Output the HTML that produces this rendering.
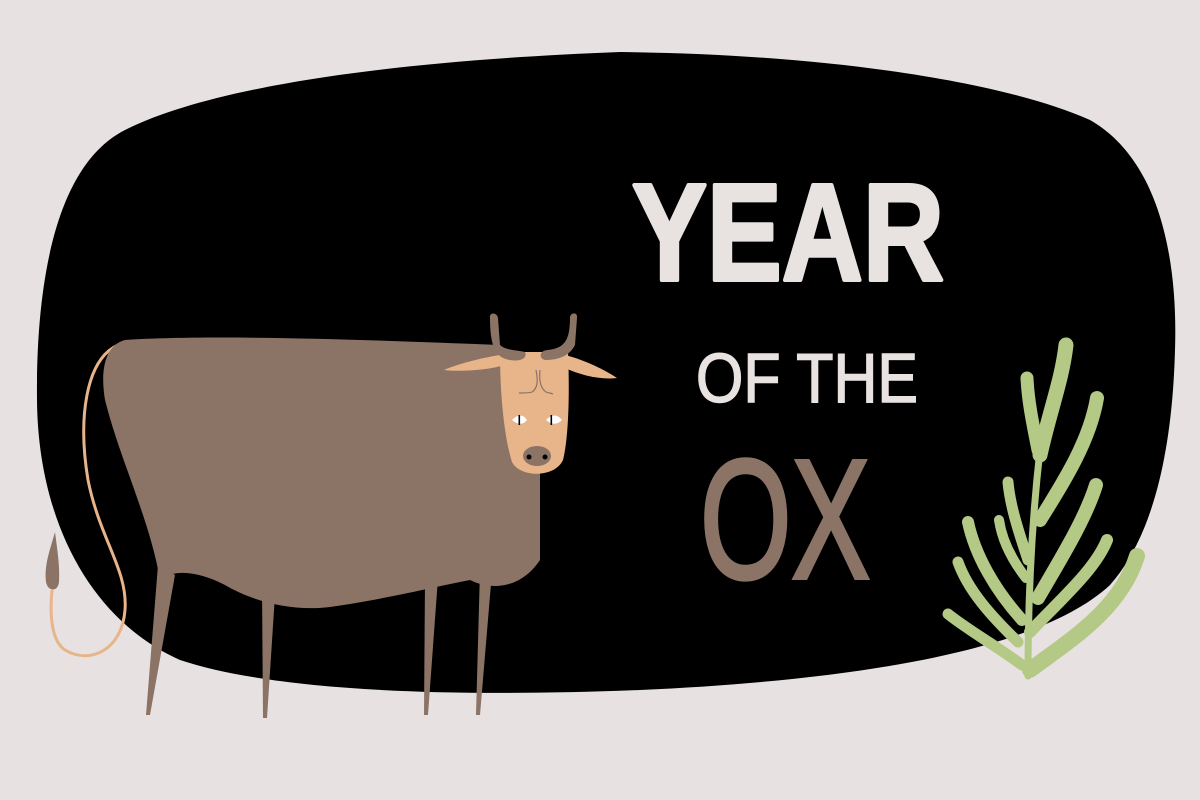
<!DOCTYPE html>
<html><head><meta charset="utf-8"><style>
html,body{margin:0;padding:0;background:#e7e2e1;}
svg{display:block}
</style></head><body>
<svg width="1200" height="800" viewBox="0 0 1200 800" xmlns="http://www.w3.org/2000/svg">
<rect width="1200" height="800" fill="#e7e2e1"/>
<!-- blob -->
<path d="M125,130 C200,92 360,62 620,52 C820,54 1000,80 1090,120 C1160,160 1178,260 1175,350 C1172,460 1150,540 1110,585 C1040,650 860,680 640,690 C440,698 270,690 180,660 C90,620 38,520 37,400 C36,300 50,168 125,130 Z" fill="#000"/>
<!-- tail -->
<path d="M118,345 C85,360 78,420 88,480 C100,540 128,570 125,610 C122,650 90,665 65,650 C50,640 50,610 52,590" fill="none" stroke="#e8b48a" stroke-width="3"/>
<path d="M55,532 C50,550 44,565 46,582 C48,592 58,592 59,582 C60,565 57,548 55,532 Z" fill="#8b7366"/>
<!-- body -->
<path d="M125,340 C200,335 330,338 500,345 L540,380 L540,560 C520,590 490,590 470,580 C420,590 380,600 330,607 C290,612 250,600 225,585 C200,572 175,568 160,580 C150,520 120,460 105,400 C100,370 105,345 125,340 Z" fill="#8b7366"/>
<!-- legs -->
<path d="M158,565 L175,575 L150,715 L146,715 Z" fill="#8b7366"/>
<path d="M262,590 L275,595 L267,718 L263,718 Z" fill="#8b7366"/>
<path d="M425,580 L438,578 L428,715 L424,715 Z" fill="#8b7366"/>
<path d="M480,570 L492,572 L480,715 L476,715 Z" fill="#8b7366"/>
<!-- ears -->
<path d="M500,355 C480,358 455,365 444,370 C462,372 488,370 505,365 Z" fill="#e8b48a"/>
<path d="M565,355 C585,360 605,370 617,378 C600,380 580,375 565,368 Z" fill="#e8b48a"/>
<!-- head -->
<path d="M500,352 L568,352 C570,400 568,440 563,460 C555,478 520,478 512,462 C505,440 500,400 500,352 Z" fill="#e8b48a"/>
<!-- horns -->
<path d="M490,318 C489,312 497,312 498,318 L500,345 C505,350 515,350 525,352 C528,358 520,362 510,360 C495,358 490,345 490,318 Z" fill="#8b7366"/>
<path d="M570,317 C571,312 578,312 577,318 L575,345 C570,355 560,360 545,360 C538,358 540,350 548,350 C565,348 570,340 570,317 Z" fill="#8b7366"/>
<!-- brow lines -->
<path d="M536,370 C538,380 538,388 532,392 C530,393 526,393 519,393 M540,370 C539,380 540,388 546,392 C548,393 551,393 553,394" fill="none" stroke="#8b7366" stroke-width="1.2"/>
<!-- eyes -->
<path d="M512,420 C518,414 523,414 527,420 C523,425 518,425 512,420 Z M546,420 C552,414 557,414 562,420 C557,425 552,425 546,420 Z" fill="#fff"/>
<rect x="518.5" y="415" width="1.6" height="10" fill="#000"/><rect x="550.5" y="415" width="1.6" height="10" fill="#000"/>
<!-- nose -->
<ellipse cx="537" cy="456" rx="14" ry="10" fill="#8b7366"/>
<circle cx="529" cy="457" r="2.5" fill="#000"/><circle cx="545" cy="457" r="2.5" fill="#000"/>
<!-- plant -->
<g fill="none" stroke="#b3c985" stroke-linecap="round">
<path d="M1028,676 C1028,600 1032,520 1040,450" stroke-width="7"/>
<path d="M1040,455 C1050,410 1062,380 1066,345" stroke-width="15"/>
<path d="M1038,450 C1032,420 1028,400 1027,378" stroke-width="13"/>
<path d="M1040,520 C1065,480 1090,440 1097,398" stroke-width="14"/>
<path d="M1038,598 C1060,560 1085,520 1096,485" stroke-width="14"/>
<path d="M1030,632 C1060,600 1095,570 1107,540" stroke-width="12"/>
<path d="M1030,670 C1070,640 1120,610 1137,556" stroke-width="16"/>
<path d="M1028,560 C1018,530 1010,505 1008,482" stroke-width="11"/>
<path d="M1026,578 C1012,560 1002,540 999,520" stroke-width="10"/>
<path d="M1022,620 C995,590 975,555 968,522" stroke-width="12"/>
<path d="M1018,642 C990,615 968,590 958,562" stroke-width="11"/>
<path d="M1022,665 C995,645 968,630 948,614" stroke-width="11"/>
</g>
<!-- text -->
<text x="632" y="280" font-family="Liberation Sans, sans-serif" font-weight="bold" font-size="138" fill="#e8e2e1" stroke="#e8e2e1" stroke-width="4" stroke-linejoin="round" textLength="312" lengthAdjust="spacingAndGlyphs">YEAR</text>
<text x="696" y="402" font-family="Liberation Sans, sans-serif" font-size="70" fill="#e8e2e1" stroke="#e8e2e1" stroke-width="1.5" textLength="222" lengthAdjust="spacingAndGlyphs">OF THE</text>
<text x="700" y="578" font-family="Liberation Sans, sans-serif" font-size="170" fill="#8b7366" stroke="#8b7366" stroke-width="4" textLength="170" lengthAdjust="spacingAndGlyphs">OX</text>
</svg>
</body></html>
